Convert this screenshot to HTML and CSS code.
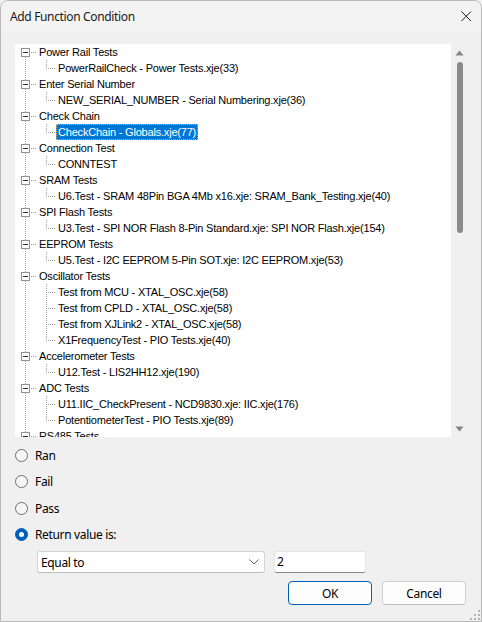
FILE: index.html
```html
<!DOCTYPE html>
<html>
<head>
<meta charset="utf-8">
<link rel="stylesheet" href="styles.css">
</head>
<body>
<div class="window">
  <div class="titlebar">
    <span class="title">Add Function Condition</span>
    <svg class="close" width="11" height="11" viewBox="0 0 11 11"><path d="M0.5 0.5 L10 10 M10 0.5 L0.5 10" stroke="#1b1b1b" stroke-width="1" fill="none"/></svg>
  </div>

  <div class="treebox">
    <div class="tree">
      <div class="row root"><span class="exp"></span><span class="hconn"></span><span class="label">Power Rail Tests</span></div>
      <div class="row child last"><span class="cconn"></span><span class="label">PowerRailCheck - Power Tests.xje(33)</span></div>
      <div class="row root"><span class="exp"></span><span class="hconn"></span><span class="label">Enter Serial Number</span></div>
      <div class="row child last"><span class="cconn"></span><span class="label">NEW_SERIAL_NUMBER - Serial Numbering.xje(36)</span></div>
      <div class="row root"><span class="exp"></span><span class="hconn"></span><span class="label">Check Chain</span></div>
      <div class="row child last"><span class="cconn"></span><span class="label selected">CheckChain - Globals.xje(77)</span></div>
      <div class="row root"><span class="exp"></span><span class="hconn"></span><span class="label">Connection Test</span></div>
      <div class="row child last"><span class="cconn"></span><span class="label">CONNTEST</span></div>
      <div class="row root"><span class="exp"></span><span class="hconn"></span><span class="label">SRAM Tests</span></div>
      <div class="row child last"><span class="cconn"></span><span class="label">U6.Test - SRAM 48Pin BGA 4Mb x16.xje: SRAM_Bank_Testing.xje(40)</span></div>
      <div class="row root"><span class="exp"></span><span class="hconn"></span><span class="label">SPI Flash Tests</span></div>
      <div class="row child last"><span class="cconn"></span><span class="label">U3.Test - SPI NOR Flash 8-Pin Standard.xje: SPI NOR Flash.xje(154)</span></div>
      <div class="row root"><span class="exp"></span><span class="hconn"></span><span class="label">EEPROM Tests</span></div>
      <div class="row child last"><span class="cconn"></span><span class="label">U5.Test - I2C EEPROM 5-Pin SOT.xje: I2C EEPROM.xje(53)</span></div>
      <div class="row root"><span class="exp"></span><span class="hconn"></span><span class="label">Oscillator Tests</span></div>
      <div class="row child"><span class="cconn"></span><span class="label">Test from MCU - XTAL_OSC.xje(58)</span></div>
      <div class="row child"><span class="cconn"></span><span class="label">Test from CPLD - XTAL_OSC.xje(58)</span></div>
      <div class="row child"><span class="cconn"></span><span class="label">Test from XJLink2 - XTAL_OSC.xje(58)</span></div>
      <div class="row child last"><span class="cconn"></span><span class="label">X1FrequencyTest - PIO Tests.xje(40)</span></div>
      <div class="row root"><span class="exp"></span><span class="hconn"></span><span class="label">Accelerometer Tests</span></div>
      <div class="row child last"><span class="cconn"></span><span class="label">U12.Test - LIS2HH12.xje(190)</span></div>
      <div class="row root"><span class="exp"></span><span class="hconn"></span><span class="label">ADC Tests</span></div>
      <div class="row child"><span class="cconn"></span><span class="label">U11.IIC_CheckPresent - NCD9830.xje: IIC.xje(176)</span></div>
      <div class="row child last"><span class="cconn"></span><span class="label">PotentiometerTest - PIO Tests.xje(89)</span></div>
      <div class="row root"><span class="exp"></span><span class="hconn"></span><span class="label">RS485 Tests</span></div>
      <div class="row child last"><span class="cconn"></span><span class="label">RS485Test - RS485.xje(12)</span></div>
    </div>
    <div class="scrollbar">
      <div class="sb-btn"><svg width="9" height="6" viewBox="0 0 9 6"><path d="M0.5 5.5 L4.5 0.5 L8.5 5.5 Z" fill="#858585"/></svg></div>
      <div class="sb-track"><div class="sb-thumb"></div></div>
      <div class="sb-btn"><svg width="9" height="6" viewBox="0 0 9 6"><path d="M0.5 0.5 L4.5 5.5 L8.5 0.5 Z" fill="#858585"/></svg></div>
    </div>
  </div>

  <div class="radios">
    <div class="radio-row"><span class="radio"></span><span class="rlabel">Ran</span></div>
    <div class="radio-row"><span class="radio"></span><span class="rlabel">Fail</span></div>
    <div class="radio-row"><span class="radio"></span><span class="rlabel">Pass</span></div>
    <div class="radio-row"><span class="radio checked"><span class="dot"></span></span><span class="rlabel">Return value is:</span></div>
  </div>

  <div class="value-row">
    <div class="combo">
      <span class="combo-text">Equal to</span>
      <svg width="10" height="6" viewBox="0 0 10 6"><path d="M0.5 0.5 L5 5 L9.5 0.5" stroke="#5f5f5f" stroke-width="1" fill="none"/></svg>
    </div>
    <div class="textbox">2</div>
  </div>

  <div class="buttons">
    <div class="btn default">OK</div>
    <div class="btn">Cancel</div>
  </div>

  <div class="footer">
    <svg width="10" height="10" viewBox="0 0 10 10">
      <rect x="8" y="0" width="2" height="2" fill="#b4b4b4"/>
      <rect x="4" y="4" width="2" height="2" fill="#b4b4b4"/>
      <rect x="8" y="4" width="2" height="2" fill="#b4b4b4"/>
      <rect x="0" y="8" width="2" height="2" fill="#b4b4b4"/>
      <rect x="4" y="8" width="2" height="2" fill="#b4b4b4"/>
      <rect x="8" y="8" width="2" height="2" fill="#b4b4b4"/>
    </svg>
  </div>
</div>
</body>
</html>
```

FILE: styles.css
```css
html, body {
  margin: 0;
  padding: 0;
  background: #f0f0f0;
}

.window {
  width: 482px;
  height: 622px;
  box-sizing: border-box;
  border: 1px solid #b9b9b9;
  border-radius: 8px 8px 0 0;
  background: #f0f0f0;
  overflow: hidden;
  display: flex;
  flex-direction: column;
  font-family: "Noto Sans", "Liberation Sans", sans-serif;
  font-size: 12px;
  letter-spacing: -0.35px;
  color: #000;
}

.titlebar {
  height: 31px;
  flex: none;
  background: #f3f3f3;
  display: flex;
  align-items: center;
  justify-content: space-between;
  padding: 0 9px 0 9px;
}

.title {
  font-size: 12px;
  color: #1a1a1a;
}

/* tree */
.treebox {
  margin: 12px 0 0 14px;
  width: 453px;
  height: 393px;
  flex: none;
  display: flex;
}

.tree {
  flex: 1;
  background-color: #fff;
  overflow: hidden;
  font-family: "Liberation Sans", Arial, sans-serif;
  font-size: 11px;
  letter-spacing: -0.2px;
  color: #000;
  background-image: repeating-linear-gradient(to bottom, #a0a0a0 0 1px, transparent 1px 2px);
  background-repeat: no-repeat;
  background-position: 10px 13px;
  background-size: 1px 100%;
}

.row {
  height: 16px;
  display: flex;
  align-items: flex-start;
  white-space: nowrap;
}

.row.root {
  padding-left: 6px;
}

.exp {
  width: 9px;
  height: 9px;
  box-sizing: border-box;
  margin-top: 4px;
  border: 1px solid #939393;
  background: linear-gradient(#2b2b2b, #2b2b2b) center / 5px 1px no-repeat, #fff;
  flex: none;
}

.hconn {
  width: 6px;
  height: 1px;
  margin-top: 8px;
  flex: none;
  background: repeating-linear-gradient(to right, transparent 0 1px, #a0a0a0 1px 2px);
}

.row.root .label {
  margin-left: 1px;
}

.label {
  height: 16px;
  line-height: 16px;
  padding: 0 2px;
  box-sizing: border-box;
}

.row.child {
  padding-left: 31px;
}

.cconn {
  width: 10px;
  height: 16px;
  flex: none;
  background:
    repeating-linear-gradient(to bottom, #a0a0a0 0 1px, transparent 1px 2px) 0 0 / 1px 16px no-repeat,
    repeating-linear-gradient(to right, transparent 0 1px, #a0a0a0 1px 2px) 1px 8px / 9px 1px no-repeat;
}

.row.child.last .cconn {
  background:
    repeating-linear-gradient(to bottom, #a0a0a0 0 1px, transparent 1px 2px) 0 0 / 1px 9px no-repeat,
    repeating-linear-gradient(to right, transparent 0 1px, #a0a0a0 1px 2px) 1px 8px / 9px 1px no-repeat;
}

.label.selected {
  background: #0078d7;
  color: #fff;
  outline: 1px dotted #f7a23a;
  outline-offset: -1px;
}

/* scrollbar */
.scrollbar {
  width: 17px;
  flex: none;
  background: #f0f0f0;
  display: flex;
  flex-direction: column;
}

.sb-btn {
  height: 17px;
  flex: none;
  display: flex;
  align-items: center;
  justify-content: center;
}

.sb-track {
  flex: 1;
  display: flex;
  justify-content: center;
}

.sb-thumb {
  width: 6px;
  height: 171px;
  margin-top: 1px;
  background: #8a8a8a;
  border-radius: 3px;
}

/* radios */
.radios {
  margin: 5px 0 0 14px;
  flex: none;
}

.radio-row {
  height: 26.5px;
  display: flex;
  align-items: center;
}

.radio {
  width: 13px;
  height: 13px;
  box-sizing: border-box;
  border: 1px solid #6f6f6f;
  border-radius: 50%;
  background: #f6f6f6;
  display: flex;
  align-items: center;
  justify-content: center;
  flex: none;
}

.radio.checked {
  background: #005fb8;
  border-color: #005fb8;
}

.dot {
  width: 5px;
  height: 5px;
  border-radius: 50%;
  background: #fff;
}

.rlabel {
  margin-left: 7px;
}

/* value row */
.value-row {
  margin: 3px 0 0 36px;
  display: flex;
  gap: 9px;
  flex: none;
}

.combo {
  width: 228px;
  height: 22px;
  box-sizing: border-box;
  border: 1px solid #d3d3d3;
  border-bottom-color: #bdbdbd;
  border-radius: 3px;
  background: #fff;
  display: flex;
  align-items: center;
  justify-content: space-between;
  padding: 0 5px 0 3px;
}

.textbox {
  width: 92px;
  height: 22px;
  box-sizing: border-box;
  border: 1px solid #e5e5e5;
  border-bottom: 1px solid #8a8a8a;
  border-radius: 3px;
  background: #fff;
  line-height: 19px;
  padding-left: 2px;
}

/* buttons */
.buttons {
  margin-top: 8px;
  padding-right: 15px;
  display: flex;
  justify-content: flex-end;
  gap: 10px;
  flex: none;
}

.btn {
  width: 84px;
  height: 24px;
  box-sizing: border-box;
  border: 1px solid #d0d0d0;
  border-bottom-color: #bcbcbc;
  border-radius: 4px;
  background: #fdfdfd;
  display: flex;
  align-items: center;
  justify-content: center;
}

.btn.default {
  border: 1px solid #005fb8;
}

.footer {
  flex: 1;
  display: flex;
  justify-content: flex-end;
  align-items: flex-end;
  padding: 0 1px 1px 0;
}
```
